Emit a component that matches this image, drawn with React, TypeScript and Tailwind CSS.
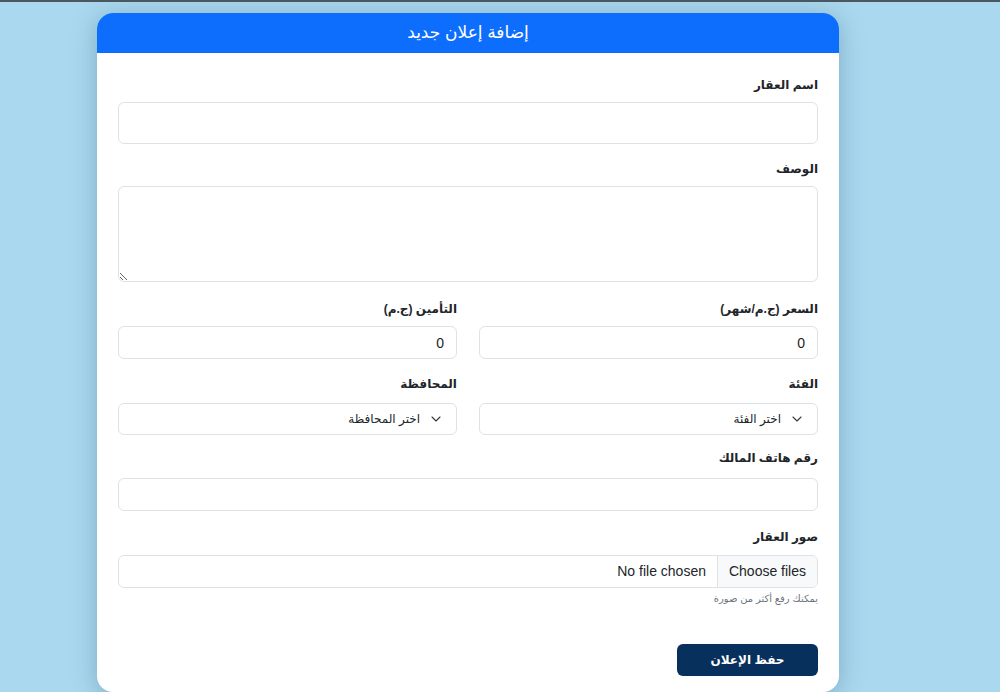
import { ChevronDown } from 'lucide-react'

const font = { fontFamily: '"Liberation Sans", "DejaVu Sans", "Noto Sans", sans-serif' }

function Label({ children, gap = 'mb-2' }: { children: React.ReactNode; gap?: string }) {
  return (
    <label className={`block text-right text-[12px] font-bold leading-[18px] text-[#212529] ${gap}`}>
      {children}
    </label>
  )
}

function TextInput({ value = '', tall = false }: { value?: string; tall?: boolean }) {
  return (
    <input
      type="text"
      dir="rtl"
      defaultValue={value}
      className={`block w-full rounded-md border border-[#dee2e6] bg-white px-3 text-right text-[14px] text-[#212529] outline-none ${
        tall ? 'h-[42px]' : 'h-[33px]'
      }`}
    />
  )
}

function SelectBox({ placeholder }: { placeholder: string }) {
  return (
    <button
      type="button"
      className="flex h-[32px] w-full items-center gap-2 rounded-md border border-[#dee2e6] bg-white px-3 text-[12px] text-[#212529]"
    >
      <ChevronDown className="h-4 w-4 text-[#343a40]" strokeWidth={1.6} />
      <span>{placeholder}</span>
    </button>
  )
}

export default function App() {
  return (
    <div dir="rtl" style={font} className="min-h-[692px] bg-[#aad8ee]">
      <div className="h-[2px] bg-[#4b5860]" />
      <div className="flex justify-end pl-[97px] pt-[11px]">
        <div className="w-[742px] overflow-hidden rounded-2xl bg-white shadow-[0_4px_24px_rgba(40,90,120,0.35)]">
          <div className="flex h-[40px] items-center justify-center bg-[#0d6efd] text-[17px] text-white">
            إضافة إعلان جديد
          </div>

          <form className="px-[21px] pb-4 pt-[23px]" onSubmit={(e) => e.preventDefault()}>
            <div className="mb-4">
              <Label>اسم العقار</Label>
              <TextInput tall />
            </div>

            <div className="mb-[18px]">
              <Label>الوصف</Label>
              <textarea
                dir="rtl"
                className="block h-[96px] w-full rounded-md border border-[#dee2e6] px-3 py-2 text-right text-[14px] outline-none"
              />
            </div>

            <div className="mb-4 grid grid-cols-2 gap-[22px]">
              <div>
                <Label>السعر (ج.م/شهر)</Label>
                <TextInput value="0" />
              </div>
              <div>
                <Label>التأمين (ج.م)</Label>
                <TextInput value="0" />
              </div>
            </div>

            <div className="mb-[14px] grid grid-cols-2 gap-[22px]">
              <div>
                <Label gap="mb-[10px]">الفئة</Label>
                <SelectBox placeholder="اختر الفئة" />
              </div>
              <div>
                <Label gap="mb-[10px]">المحافظة</Label>
                <SelectBox placeholder="اختر المحافظة" />
              </div>
            </div>

            <div className="mb-[17px]">
              <Label gap="mb-[11px]">رقم هاتف المالك</Label>
              <TextInput />
            </div>

            <div>
              <Label gap="mb-[9px]">صور العقار</Label>
              <div className="flex h-[33px] items-stretch overflow-hidden rounded-md border border-[#dee2e6] text-[14px] text-[#212529]">
                <span className="flex items-center border-l border-[#dee2e6] bg-[#f8f9fa] px-[11px]">
                  Choose files
                </span>
                <span className="flex items-center px-[11px]">No file chosen</span>
              </div>
              <p className="mt-[4px] text-right text-[10px] leading-[14px] text-[#6c757d]">
                يمكنك رفع أكثر من صورة
              </p>
            </div>

            <div className="mt-[38px]">
              <button
                type="submit"
                className="h-[32px] w-[141px] rounded-md bg-[#08305c] text-[12px] font-bold text-white"
              >
                حفظ الإعلان
              </button>
            </div>
          </form>
        </div>
      </div>
    </div>
  )
}
